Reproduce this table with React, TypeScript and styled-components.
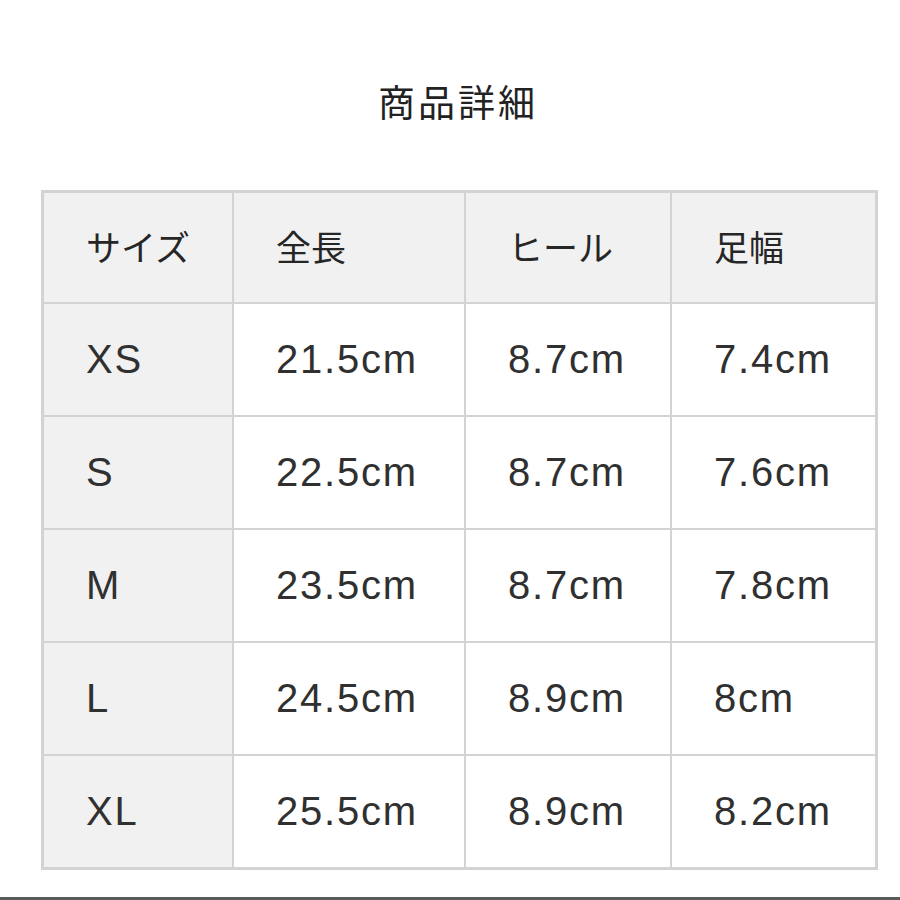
import React from "react";
import styled, { createGlobalStyle } from "styled-components";

const GlobalStyle = createGlobalStyle`
  html, body {
    margin: 0;
    padding: 0;
    background: #fff;
  }
  body {
    font-family: "Liberation Sans", "Noto Sans CJK JP", sans-serif;
    color: #2a2a2a;
  }
`;

const Page = styled.div`
  display: flex;
  flex-direction: column;
  width: 900px;
  height: 900px;
  box-sizing: border-box;
`;

const Title = styled.h1`
  margin: 0 0 67px;
  padding-top: 79px;
  padding-left: 16px;
  text-align: center;
  font-family: "Noto Sans CJK JP", sans-serif;
  font-weight: 400;
  font-size: 37px;
  line-height: 44px;
  letter-spacing: 3px;
  color: #222;
`;

const SizeTable = styled.div`
  display: grid;
  grid-template-columns: 188px 230px 204px 203px;
  grid-template-rows: 109px;
  grid-auto-rows: 111px;
  gap: 2px;
  padding: 3px;
  margin-left: 41px;
  width: 831px;
  background: #d3d3d3;
`;

const Cell = styled.div<{ $head?: boolean }>`
  display: flex;
  align-items: center;
  padding-left: 42px;
  background: ${p => (p.$head ? "#f1f1f1" : "#fff")};
  font-size: 40px;
  letter-spacing: 1.8px;
  color: #303030;
`;

const HeadText = styled.span`
  font-family: "Noto Sans CJK JP", sans-serif;
  font-size: 35px;
  letter-spacing: 0;
  padding-bottom: 4px;
  color: #262626;
`;

const BottomRule = styled.div`
  margin-top: auto;
  height: 3px;
  background: #5a5a5a;
`;

const headers = ["サイズ", "全長", "ヒール", "足幅"];

const rows = [
  ["XS", "21.5cm", "8.7cm", "7.4cm"],
  ["S", "22.5cm", "8.7cm", "7.6cm"],
  ["M", "23.5cm", "8.7cm", "7.8cm"],
  ["L", "24.5cm", "8.9cm", "8cm"],
  ["XL", "25.5cm", "8.9cm", "8.2cm"],
];

export default function App() {
  return (
    <Page>
      <GlobalStyle />
      <Title>商品詳細</Title>
      <SizeTable>
        {headers.map(h => (
          <Cell key={h} $head>
            <HeadText>{h}</HeadText>
          </Cell>
        ))}
        {rows.map(r =>
          r.map((v, i) => (
            <Cell key={r[0] + i} $head={i === 0}>
              {v}
            </Cell>
          ))
        )}
      </SizeTable>
      <BottomRule />
    </Page>
  );
}
